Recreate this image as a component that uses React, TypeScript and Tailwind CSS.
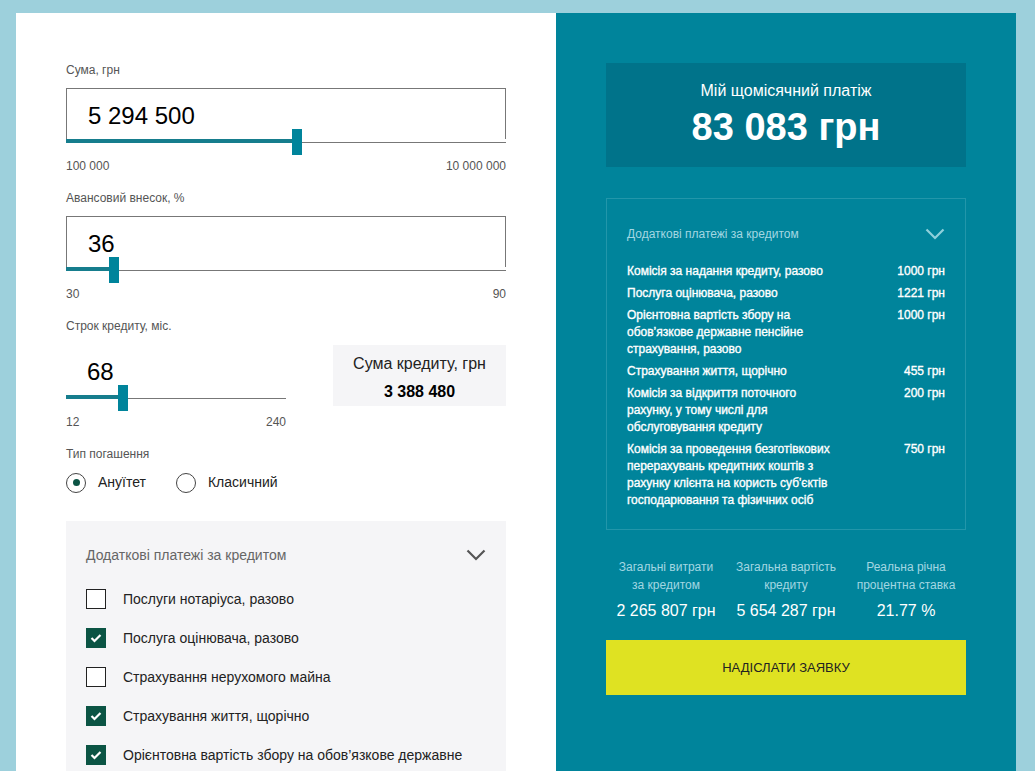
import { ReactNode } from "react";

interface SliderProps {
  value: string;
  pct: number;
  width: number;
  boxed?: boolean;
}

function SliderField({ value, pct, width, boxed = true }: SliderProps) {
  const thumbLeft = pct * (width - 10);
  return (
    <div className="flex flex-col h-[55px]" style={{ width }}>
      <div
        className={
          boxed
            ? "flex-1 flex items-center pl-[21px] border-t border-l border-r border-[#777]"
            : "flex-1 flex items-center pl-[21px]"
        }
      >
        <span className="text-[24px] leading-none text-black pt-[4px]">{value}</span>
      </div>
      <div className="relative h-[4px]">
        <div className="absolute left-0 right-0 bottom-0 h-px bg-[#777]" />
        <div className="absolute left-0 top-0 h-[4px] bg-[#167d8d]" style={{ width: thumbLeft + 5 }} />
        <div className="absolute top-[-10px] w-[10px] h-[26px] bg-[#00849b]" style={{ left: thumbLeft }} />
      </div>
    </div>
  );
}

function Label({ children }: { children: ReactNode }) {
  return <div className="text-[12px] leading-[14px] text-[#555]">{children}</div>;
}

function Range({ min, max, width }: { min: string; max: string; width: number }) {
  return (
    <div className="flex justify-between mt-[16px] text-[12px] leading-[14px] text-[#555]" style={{ width }}>
      <span>{min}</span>
      <span>{max}</span>
    </div>
  );
}

function Chevron({ color }: { color: string }) {
  return (
    <svg width="20" height="12" viewBox="0 0 20 12" fill="none">
      <path d="M1.5 1.5 L10 10 L18.5 1.5" stroke={color} strokeWidth="2.2" />
    </svg>
  );
}

function Checkbox({ checked, label }: { checked: boolean; label: string }) {
  return (
    <div className="flex items-center gap-[17px]">
      {checked ? (
        <div className="w-[20px] h-[20px] bg-[#0b5444] flex items-center justify-center">
          <svg width="12" height="10" viewBox="0 0 12 10" fill="none">
            <path d="M1.5 5 L4.5 8 L10.5 2" stroke="white" strokeWidth="2.2" />
          </svg>
        </div>
      ) : (
        <div className="w-[20px] h-[20px] border-[1.5px] border-[#222] bg-white" />
      )}
      <span className="text-[14px] leading-[20px] text-[#222]">{label}</span>
    </div>
  );
}

const extras = [
  { label: "Комісія за надання кредиту, разово", value: "1000 грн" },
  { label: "Послуга оцінювача, разово", value: "1221 грн" },
  { label: "Орієнтовна вартість збору на обов’язкове державне пенсійне страхування, разово", value: "1000 грн" },
  { label: "Страхування життя, щорічно", value: "455 грн" },
  { label: "Комісія за відкриття поточного рахунку, у тому числі для обслуговування кредиту", value: "200 грн" },
  { label: "Комісія за проведення безготівкових перерахувань кредитних коштів з рахунку клієнта на користь суб'єктів господарювання та фізичних осіб", value: "750 грн" },
];

const totals = [
  { label: "Загальні витрати за кредитом", value: "2 265 807 грн" },
  { label: "Загальна вартість кредиту", value: "5 654 287 грн" },
  { label: "Реальна річна процентна ставка", value: "21.77 %" },
];

export default function App() {
  return (
    <div className="h-[771px] overflow-hidden bg-[#9dd0dc] pt-[13px] pl-[16px] pr-[19px] font-['Liberation_Sans',Arial,sans-serif]">
      <div className="flex h-[800px]">
        {/* left: calculator inputs */}
        <div className="w-[540px] bg-white px-[50px] pt-[50px]">
          <Label>Сума, грн</Label>
          <div className="mt-[11px]">
            <SliderField value="5 294 500" pct={0.5247} width={440} />
          </div>
          <Range min="100 000" max="10 000 000" width={440} />

          <div className="mt-[18px]">
            <Label>Авансовий внесок, %</Label>
          </div>
          <div className="mt-[11px]">
            <SliderField value="36" pct={0.1} width={440} />
          </div>
          <Range min="30" max="90" width={440} />

          <div className="mt-[18px]">
            <Label>Строк кредиту, міс.</Label>
          </div>
          <div className="flex justify-between mt-[11px]">
            <div>
              <SliderField value="68" pct={0.2456} width={220} boxed={false} />
              <Range min="12" max="240" width={220} />
            </div>
            <div className="w-[173px] h-[61px] mt-[1px] bg-[#f5f5f7] flex flex-col items-center justify-center gap-[10px] pt-[4px]">
              <span className="text-[16px] leading-[18px] text-[#222]">Сума кредиту, грн</span>
              <span className="text-[16px] leading-[18px] font-bold text-black">3 388 480</span>
            </div>
          </div>

          <div className="mt-[18px]">
            <Label>Тип погашення</Label>
          </div>
          <div className="flex items-center mt-[11px]">
            <div className="w-[20px] h-[20px] rounded-full border-[1.5px] border-[#444] flex items-center justify-center">
              <div className="w-[7px] h-[7px] rounded-full bg-[#0b5444]" />
            </div>
            <span className="ml-[12px] text-[14px] text-[#222]">Ануїтет</span>
            <div className="ml-[30px] w-[20px] h-[20px] rounded-full border-[1.5px] border-[#444]" />
            <span className="ml-[12px] text-[14px] text-[#222]">Класичний</span>
          </div>

          <div className="mt-[28px] bg-[#f5f5f7] px-[20px] pt-[24px] pb-[30px]">
            <div className="flex items-center justify-between">
              <span className="text-[14px] leading-[20px] text-[#666]">Додаткові платежі за кредитом</span>
              <Chevron color="#555" />
            </div>
            <div className="mt-[24px] flex flex-col gap-[19px]">
              <Checkbox checked={false} label="Послуги нотаріуса, разово" />
              <Checkbox checked label="Послуга оцінювача, разово" />
              <Checkbox checked={false} label="Страхування нерухомого майна" />
              <Checkbox checked label="Страхування життя, щорічно" />
              <Checkbox checked label="Орієнтовна вартість збору на обов’язкове державне" />
            </div>
          </div>
        </div>

        {/* right: results */}
        <div className="flex-1 bg-[#00849b] px-[50px] pt-[50px]">
          <div className="h-[104px] bg-[#00738a] flex flex-col items-center pt-[19px] text-white">
            <span className="text-[16px] leading-[18px]">Мій щомісячний платіж</span>
            <span className="text-[38px] leading-[42px] font-bold mt-[6px]">83 083 грн</span>
          </div>

          <div className="mt-[31px] border border-[#2296aa] px-[20px] pt-[27px] pb-[20px]">
            <div className="flex items-center justify-between">
              <span className="text-[12px] leading-[16px] text-[#a3d7e2]">Додаткові платежі за кредитом</span>
              <Chevron color="#8fd0dc" />
            </div>
            <div className="mt-[21px] flex flex-col gap-[5px]">
              {extras.map((item) => (
                <div
                  key={item.label}
                  className="flex justify-between text-[12px] leading-[17px] text-white [-webkit-text-stroke:0.35px_white]"
                >
                  <span className="w-[212px]">{item.label}</span>
                  <span>{item.value}</span>
                </div>
              ))}
            </div>
          </div>

          <div className="grid grid-cols-3 mt-[28px] text-center">
            {totals.map((t) => (
              <div key={t.label} className="flex flex-col items-center">
                <span className="w-[104px] text-[12px] leading-[18px] text-[#a3d7e2]">{t.label}</span>
                <span className="mt-[7px] text-[16px] leading-[20px] text-white">{t.value}</span>
              </div>
            ))}
          </div>

          <button className="mt-[19px] w-full h-[55px] bg-[#dfe222] text-[13px] text-[#222] uppercase">
            Надіслати заявку
          </button>
        </div>
      </div>
    </div>
  );
}
